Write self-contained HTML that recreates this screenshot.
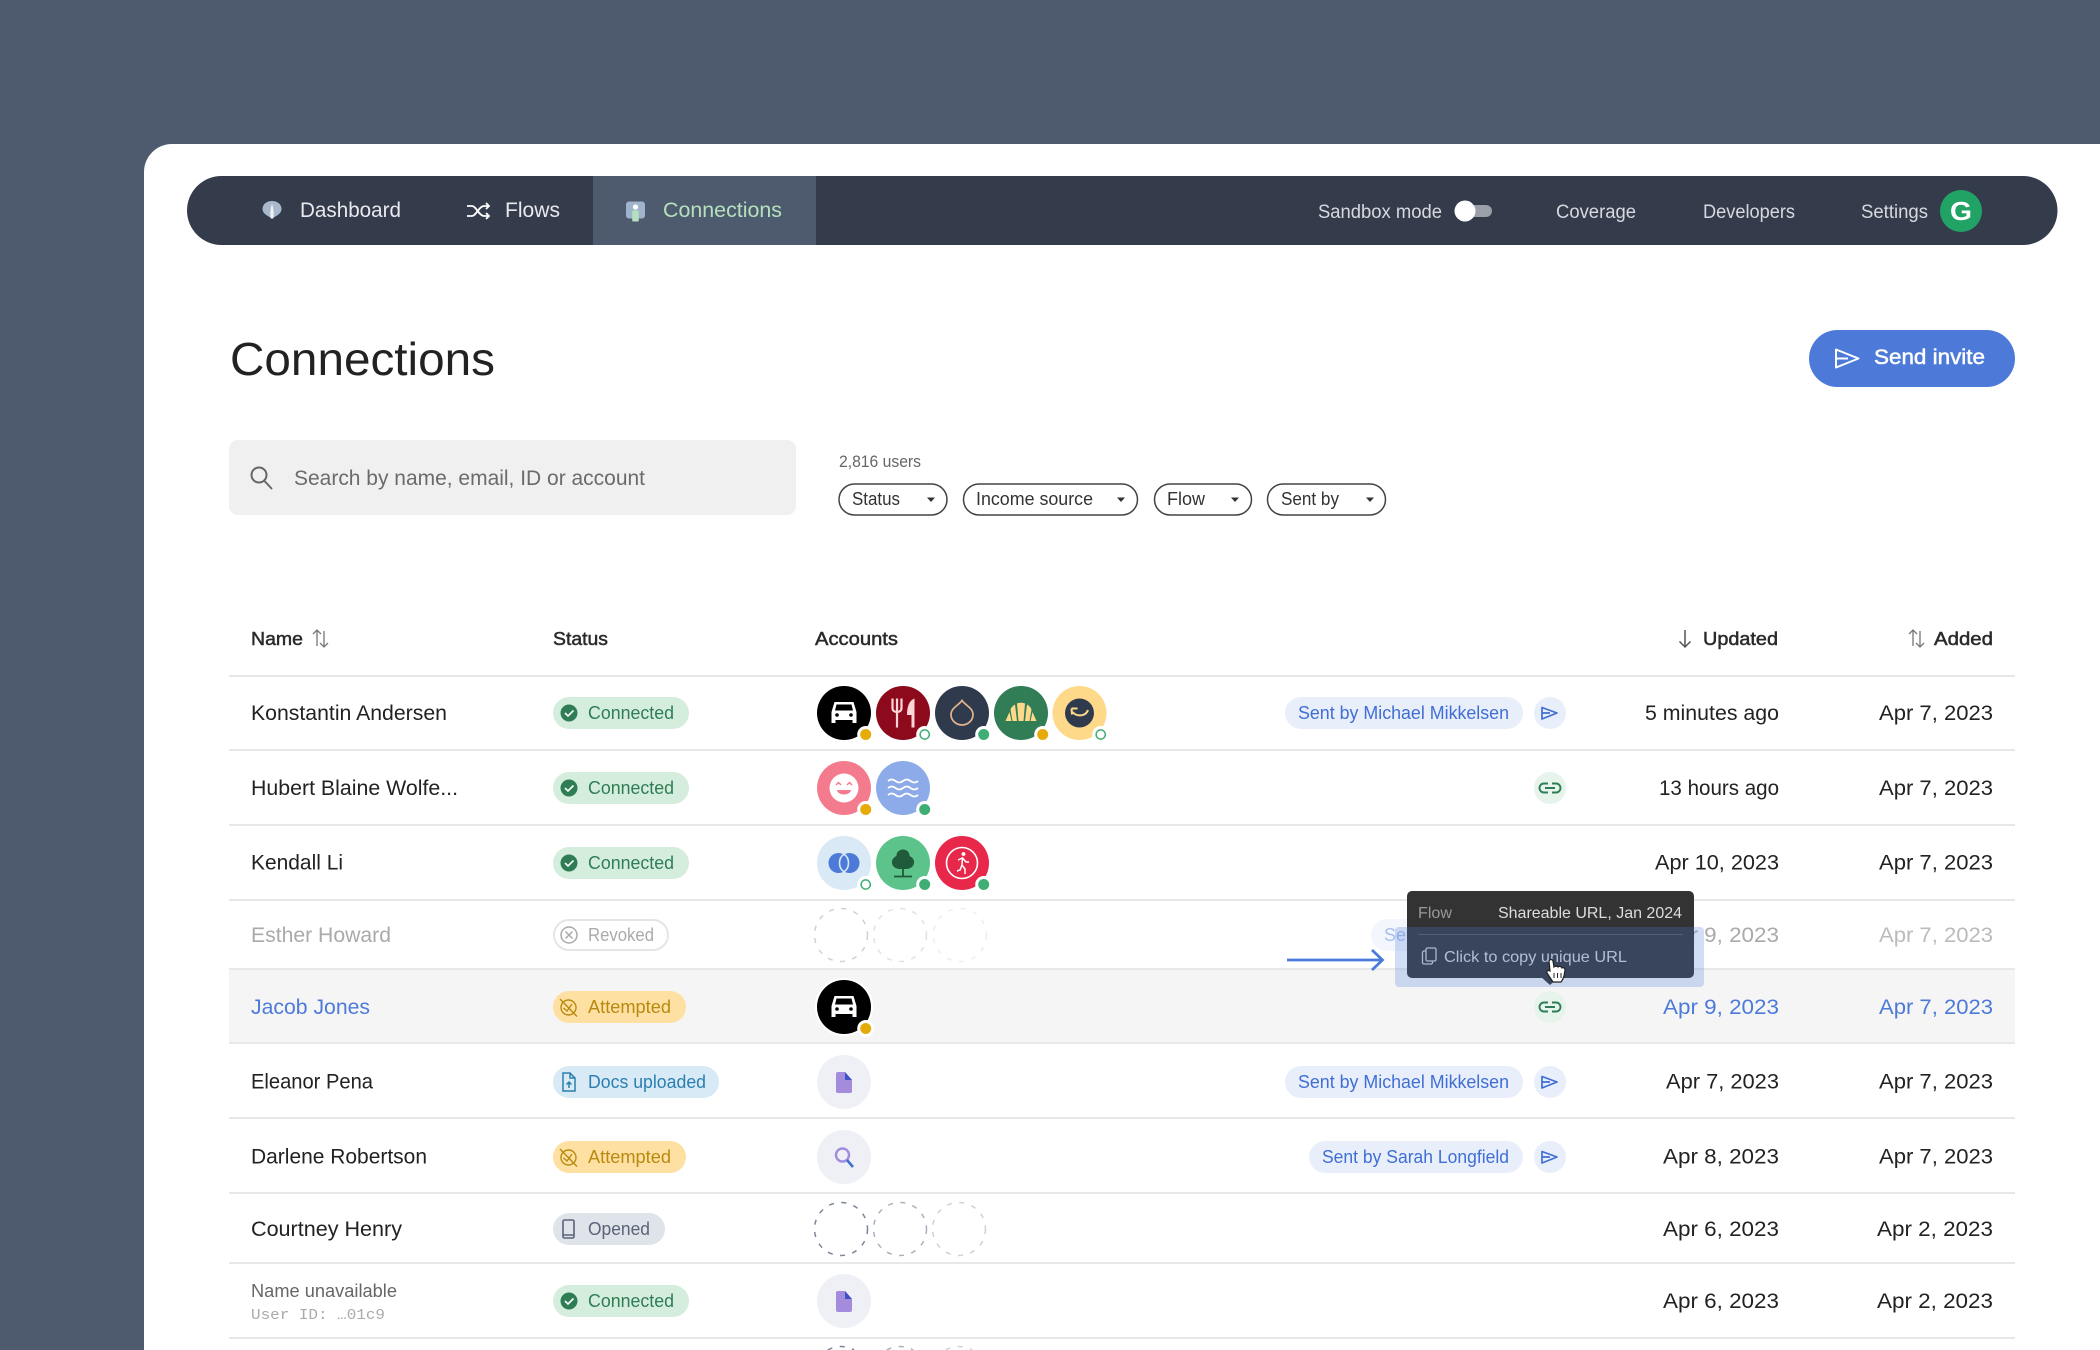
<!DOCTYPE html>
<html lang="en"><head><meta charset="utf-8"><title>Connections</title>
<style>
html,body{margin:0;padding:0;background:#4e5b6e;width:2100px;height:1350px;overflow:hidden}
svg{display:block}
text{font-family:"Liberation Sans",sans-serif;font-size:21.5px;fill:#222;white-space:pre}
.nav{font-size:21px;fill:#e8eaee}
.nav2{font-size:19px;fill:#d6d9df}
.f{font-size:18px;fill:#333}
.h{font-size:18.5px;fill:#2a2a2a;stroke:#2a2a2a;stroke-width:.5px}
.g{font-size:18px;fill:#2e7d55}
.y{font-size:18px;fill:#b98a0f}
.b{font-size:18px;fill:#2a7fb0}
.o{font-size:18px;fill:#5a6478}
.r{font-size:18px;fill:#aaa}
.s{font-size:18px;fill:#3f6fd4}
.t{font-size:16px;fill:#ddd}
.bl{fill:#4d7ad9}
.gr{fill:#aaa}
</style></head><body>
<svg xmlns="http://www.w3.org/2000/svg" width="2100" height="1350" viewBox="0 0 2100 1350">
<rect width="2100" height="1350" fill="#4e5b6e"/>
<path d="M144,1350 V172 a28,28 0 0 1 28,-28 H2100 V1350 Z" fill="#fff"/>

<!-- NAV -->
<rect x="187" y="176" width="1870.5" height="69" rx="34.5" fill="#343b4b"/>
<rect x="593" y="176" width="223" height="69" fill="#4e5b6e"/>
<g transform="translate(272,210)"><path d="M-9.5,-1 C-9.5,-6 -5,-9 0,-9 C5,-9 9.5,-6 9.5,-1 C9.5,3 6,5 2.5,7 L-2.5,7 C-6,5 -9.5,3 -9.5,-1Z" fill="#a9b8cc"/><path d="M0,-6 C1.500,-2 2,3 1.500,8.500 L-1.500,8.500 C-2,3 -1.500,-2 0,-6Z" fill="#eef2f6"/></g>
<text class="nav" x="300" y="217" textLength="101" lengthAdjust="spacingAndGlyphs">Dashboard</text>
<g transform="translate(478,211)" fill="none" stroke="#fff" stroke-width="1.8"><path d="M-11,-5 H-6 C-2,-5 1,5 6,5 H11"/><path d="M-11,5 H-6 C-2,5 1,-5 6,-5 H11"/><path d="M8,-8 L11,-5 L8,-2 M8,2 L11,5 L8,8"/></g>
<text class="nav" x="505" y="217" textLength="55" lengthAdjust="spacingAndGlyphs">Flows</text>
<g transform="translate(635.5,211)"><rect x="-9.5" y="-9.5" width="19" height="17" rx="3" fill="#9fb3cc"/><circle cx="0" cy="-4" r="2.6" fill="#fff"/><rect x="-3.3" y="-0.5" width="6.6" height="11" rx="1" fill="#b5e0bd"/></g>
<text class="nav" x="663" y="217" textLength="119" lengthAdjust="spacingAndGlyphs" style="fill:#b5e0bd">Connections</text>
<text class="nav2" x="1318" y="218" textLength="124" lengthAdjust="spacingAndGlyphs">Sandbox mode</text>
<rect x="1465" y="205" width="27" height="12" rx="6" fill="#9a9fa9"/>
<circle cx="1465" cy="211" r="10.5" fill="#fff"/>
<text class="nav2" x="1556" y="218" textLength="80" lengthAdjust="spacingAndGlyphs">Coverage</text>
<text class="nav2" x="1703" y="218" textLength="92" lengthAdjust="spacingAndGlyphs">Developers</text>
<text class="nav2" x="1861" y="218" textLength="67" lengthAdjust="spacingAndGlyphs">Settings</text>
<circle cx="1961" cy="211" r="21" fill="#21a366"/>
<text x="1950" y="220" textLength="22" lengthAdjust="spacingAndGlyphs" style="font-size:26px;font-weight:bold;fill:#fff">G</text>

<!-- TITLE -->
<text x="230" y="375" textLength="265" lengthAdjust="spacingAndGlyphs" style="font-size:46px">Connections</text>
<rect x="1809" y="330" width="206" height="57" rx="28.5" fill="#4d7ad9"/>
<path d="M1836,349.500 L1858.500,358.500 L1836,367.500 Z M1836,358.500 H1848" fill="none" stroke="#fff" stroke-width="2" stroke-linejoin="round"/>
<text x="1874" y="364" textLength="111" lengthAdjust="spacingAndGlyphs" style="font-size:21px;fill:#fff;stroke:#fff;stroke-width:.5px">Send invite</text>

<!-- SEARCH + FILTERS -->
<rect x="229" y="440" width="567" height="75" rx="9" fill="#f0f0f0"/>
<circle cx="259" cy="475" r="7.5" fill="none" stroke="#666" stroke-width="2"/><path d="M264.500,481 L272,489" stroke="#666" stroke-width="2"/>
<text x="294" y="485" textLength="351" lengthAdjust="spacingAndGlyphs" style="font-size:21px;fill:#6b6b6b">Search by name, email, ID or account</text>
<text x="839" y="467" textLength="82" lengthAdjust="spacingAndGlyphs" style="font-size:16.500px;fill:#666">2,816 users</text>
<g fill="none" stroke="#444" stroke-width="1.500">
<rect x="839" y="484" width="108" height="31" rx="15.500"/>
<rect x="963.500" y="484" width="174" height="31" rx="15.500"/>
<rect x="1154.500" y="484" width="97" height="31" rx="15.500"/>
<rect x="1267.500" y="484" width="118" height="31" rx="15.500"/>
</g>
<g fill="#333">
<path d="M927,497.500 h8 l-4,4.500z"/><path d="M1117,497.500 h8 l-4,4.500z"/><path d="M1231,497.500 h8 l-4,4.500z"/><path d="M1366,497.500 h8 l-4,4.500z"/>
</g>
<text class="f" x="852" y="505" textLength="48" lengthAdjust="spacingAndGlyphs">Status</text>
<text class="f" x="976" y="505" textLength="117" lengthAdjust="spacingAndGlyphs">Income source</text>
<text class="f" x="1167" y="505" textLength="38" lengthAdjust="spacingAndGlyphs">Flow</text>
<text class="f" x="1281" y="505" textLength="58" lengthAdjust="spacingAndGlyphs">Sent by</text>

<!-- TABLE HEADER -->
<text class="h" x="251" y="645" textLength="52" lengthAdjust="spacingAndGlyphs">Name</text>
<path d="M317,646 V630 M313,634 L317,630 L321,634 M324,631 V647 M320,643 L324,647 L328,643" fill="none" stroke="#777" stroke-width="1.300"/>
<text class="h" x="553" y="645" textLength="55" lengthAdjust="spacingAndGlyphs">Status</text>
<text class="h" x="815" y="645" textLength="83" lengthAdjust="spacingAndGlyphs">Accounts</text>
<path d="M1685,630 V647 M1679.500,641.500 L1685,647 L1690.500,641.500" fill="none" stroke="#555" stroke-width="1.500"/>
<text class="h" x="1703" y="645" textLength="75" lengthAdjust="spacingAndGlyphs">Updated</text>
<path d="M1913,646 V630 M1909,634 L1913,630 L1917,634 M1920,631 V647 M1916,643 L1920,647 L1924,643" fill="none" stroke="#777" stroke-width="1.300"/>
<text class="h" x="1934" y="645" textLength="59" lengthAdjust="spacingAndGlyphs">Added</text>

<!-- highlighted row bg and lines -->
<rect x="229" y="968" width="1786" height="75" fill="#f5f5f5"/>
<g fill="#e8e8e8">
<rect x="229" y="675" width="1786" height="2"/><rect x="229" y="749" width="1786" height="2"/><rect x="229" y="824" width="1786" height="2"/><rect x="229" y="899" width="1786" height="2"/><rect x="229" y="968" width="1786" height="2"/><rect x="229" y="1042" width="1786" height="2"/><rect x="229" y="1117" width="1786" height="2"/><rect x="229" y="1192" width="1786" height="2"/><rect x="229" y="1262" width="1786" height="2"/><rect x="229" y="1337" width="1786" height="2"/>
</g>

<!-- NAMES -->
<text x="251" y="720" textLength="196" lengthAdjust="spacingAndGlyphs">Konstantin Andersen</text>
<text x="251" y="795" textLength="207" lengthAdjust="spacingAndGlyphs">Hubert Blaine Wolfe...</text>
<text x="251" y="869.500" textLength="92" lengthAdjust="spacingAndGlyphs">Kendall Li</text>
<text class="gr" x="251" y="942" textLength="140" lengthAdjust="spacingAndGlyphs">Esther Howard</text>
<text class="bl" x="251" y="1014" textLength="119" lengthAdjust="spacingAndGlyphs">Jacob Jones</text>
<text x="251" y="1088.500" textLength="122" lengthAdjust="spacingAndGlyphs">Eleanor Pena</text>
<text x="251" y="1163.500" textLength="176" lengthAdjust="spacingAndGlyphs">Darlene Robertson</text>
<text x="251" y="1236" textLength="151" lengthAdjust="spacingAndGlyphs">Courtney Henry</text>
<text x="251" y="1297" textLength="146" lengthAdjust="spacingAndGlyphs" style="font-size:18px;fill:#666">Name unavailable</text>
<text x="251" y="1319" textLength="134" lengthAdjust="spacingAndGlyphs" style="font-family:'Liberation Mono',monospace;font-size:15px;fill:#aaa">User ID: …01c9</text>

<!-- STATUS PILLS -->
<rect x="553" y="697" width="136" height="32" rx="16" fill="#d5eddd"/><circle cx="569" cy="713" r="8.500" fill="#2e7d55"/><path d="M565,713 l3,3 l5.500,-5.500" fill="none" stroke="#fff" stroke-width="1.600"/>
<text class="g" x="588" y="719" textLength="86" lengthAdjust="spacingAndGlyphs">Connected</text>
<rect x="553" y="772" width="136" height="32" rx="16" fill="#d5eddd"/><circle cx="569" cy="788" r="8.500" fill="#2e7d55"/><path d="M565,788 l3,3 l5.500,-5.500" fill="none" stroke="#fff" stroke-width="1.600"/>
<text class="g" x="588" y="794" textLength="86" lengthAdjust="spacingAndGlyphs">Connected</text>
<rect x="553" y="847" width="136" height="32" rx="16" fill="#d5eddd"/><circle cx="569" cy="863" r="8.500" fill="#2e7d55"/><path d="M565,863 l3,3 l5.500,-5.500" fill="none" stroke="#fff" stroke-width="1.600"/>
<text class="g" x="588" y="869" textLength="86" lengthAdjust="spacingAndGlyphs">Connected</text>
<rect x="554" y="920" width="114" height="30" rx="15" fill="#fff" stroke="#e5e5e5" stroke-width="2"/><circle cx="569" cy="935" r="8" fill="none" stroke="#aaa" stroke-width="1.500"/><path d="M565.500,931.500 l7,7 m0,-7 l-7,7" stroke="#aaa" stroke-width="1.500"/>
<text class="r" x="588" y="941" textLength="66" lengthAdjust="spacingAndGlyphs">Revoked</text>
<rect x="553" y="991" width="133" height="32" rx="16" fill="#ffe0a3"/><g fill="none" stroke="#b98a0f" stroke-width="1.400"><circle cx="568.500" cy="1007.500" r="7.500"/><path d="M560,999 L577,1016.500 M563.500,1008 L567,1011 L572,1004"/></g>
<text class="y" x="588" y="1013" textLength="83" lengthAdjust="spacingAndGlyphs">Attempted</text>
<rect x="553" y="1066" width="166" height="32" rx="16" fill="#d8eaf5"/><path d="M563,1073 h7 l5,5 v13 h-12z M570,1073 v5 h5 M569,1088 v-6 m-2.500,2.500 l2.500,-2.500 l2.500,2.500" fill="none" stroke="#2a7fb0" stroke-width="1.500"/>
<text class="b" x="588" y="1088" textLength="118" lengthAdjust="spacingAndGlyphs">Docs uploaded</text>
<rect x="553" y="1141" width="133" height="32" rx="16" fill="#ffe0a3"/><g fill="none" stroke="#b98a0f" stroke-width="1.400"><circle cx="568.500" cy="1157.500" r="7.500"/><path d="M560,1149 L577,1166.500 M563.500,1158 L567,1161 L572,1154"/></g>
<text class="y" x="588" y="1163" textLength="83" lengthAdjust="spacingAndGlyphs">Attempted</text>
<rect x="553" y="1213" width="112" height="32" rx="16" fill="#dfe3ea"/><rect x="563" y="1220" width="11" height="18" rx="1.500" fill="none" stroke="#5a6478" stroke-width="1.600"/><path d="M563,1235 h11" stroke="#5a6478" stroke-width="1.500"/>
<text class="o" x="588" y="1235" textLength="62" lengthAdjust="spacingAndGlyphs">Opened</text>
<rect x="553" y="1285" width="136" height="32" rx="16" fill="#d5eddd"/><circle cx="569" cy="1301" r="8.500" fill="#2e7d55"/><path d="M565,1301 l3,3 l5.500,-5.500" fill="none" stroke="#fff" stroke-width="1.600"/>
<text class="g" x="588" y="1307" textLength="86" lengthAdjust="spacingAndGlyphs">Connected</text>

<!-- AVATARS ROW 1 -->
<g transform="translate(844,713)"><circle r="27" fill="#000"/><path d="M-12.500,10 V-1 L-9.500,-11 H9.500 L12.500,-1 V10 H8.500 V7 H-8.500 V10 Z" fill="#fff"/><path d="M-7.500,-8.500 H7.500 L9,-2.500 H-9 Z" fill="#000"/><circle cx="-7" cy="2" r="1.800" fill="#000"/><circle cx="7" cy="2" r="1.800" fill="#000"/></g>
<circle cx="865.700" cy="734.500" r="8.500" fill="#fff"/><circle cx="865.700" cy="734.500" r="5.500" fill="#e5ab0a"/>
<g transform="translate(903,713)"><circle r="27" fill="#8c0a1c"/><path d="M-10.500,-14.500 V-5 C-10.500,-2 -8,-1 -6,-1 C-4,-1 -1.500,-2 -1.500,-5 V-14.500 M-6,-14.500 V14.500" fill="none" stroke="#ffd5d8" stroke-width="2.200"/><path d="M11.500,-14.500 C6,-12.500 4,-6 4,2 H8.500 V14.500 H11.500 Z" fill="#ffd5d8"/></g>
<circle cx="924.700" cy="734.500" r="8.500" fill="#fff"/><circle cx="924.700" cy="734.500" r="4.600" fill="#fff" stroke="#3fae74" stroke-width="1.500"/>
<g transform="translate(962,713)"><circle r="27" fill="#2f3a4d"/><path d="M0,-12.500 C3,-8 11,-5 11,1.500 A11,10.500 0 0 1 -11,1.500 C-11,-5 -3,-8 0,-12.500Z" fill="none" stroke="#e5b58f" stroke-width="1.700"/></g>
<circle cx="983.700" cy="734.500" r="8.500" fill="#fff"/><circle cx="983.700" cy="734.500" r="5.500" fill="#3fae74"/>
<g transform="translate(1021,713)"><circle r="27" fill="#317d56"/><g fill="#ffd98a"><path d="M-4,-9.500 C-2,-10.500 2,-10.500 4,-9.500 L2.500,8 H-2.500Z"/><path d="M-6,-8.500 L-4,8 H-8.500 L-10.500,-3.500 C-9.500,-6 -8,-7.500 -6,-8.500Z"/><path d="M6,-8.500 L4,8 H8.500 L10.500,-3.500 C9.500,-6 8,-7.500 6,-8.500Z"/><path d="M-11.500,-1 L-9.500,8 H-15.500 Z"/><path d="M11.500,-1 L9.500,8 H15.500 Z"/></g></g>
<circle cx="1042.700" cy="734.500" r="8.500" fill="#fff"/><circle cx="1042.700" cy="734.500" r="5.500" fill="#e5ab0a"/>
<g transform="translate(1079.500,713)"><circle r="27" fill="#ffd98a"/><circle r="14.500" fill="#2f3a4d"/><path d="M8.500,-3 C6.500,3 -2,4.500 -7,-1 M-8,-4.500 L-7.500,1.500 M-8,-4.500 L-2,-4.500" fill="none" stroke="#ffd98a" stroke-width="2"/></g>
<circle cx="1100.700" cy="734.500" r="8.500" fill="#fff"/><circle cx="1100.700" cy="734.500" r="4.600" fill="#fff" stroke="#3fae74" stroke-width="1.500"/>

<!-- AVATARS ROW 2 -->
<g transform="translate(844,788)"><circle r="27" fill="#f47a8d"/><circle r="14.500" fill="#fff"/><path d="M-8,-3 L-5.500,-5.500 L-3,-3 M3,-3 L5.500,-5.500 L8,-3" fill="none" stroke="#f47a8d" stroke-width="1.500"/><path d="M-7,2 H7 C6,8 -6,8 -7,2Z" fill="#f47a8d"/></g>
<circle cx="865.700" cy="809.500" r="8.500" fill="#fff"/><circle cx="865.700" cy="809.500" r="5.500" fill="#e5ab0a"/>
<g transform="translate(903,788)"><circle r="27" fill="#8dabe8"/><path d="M-15,-7 q3.750,-3 7.500,0 t7.500,0 t7.500,0 t7.500,0 M-15,0 q3.750,-3 7.500,0 t7.500,0 t7.500,0 t7.500,0 M-15,7 q3.750,-3 7.500,0 t7.500,0 t7.500,0 t7.500,0" fill="none" stroke="#fff" stroke-width="1.800"/></g>
<circle cx="924.700" cy="809.500" r="8.500" fill="#fff"/><circle cx="924.700" cy="809.500" r="5.500" fill="#3fae74"/>

<!-- AVATARS ROW 3 -->
<g transform="translate(844,863)"><circle r="27" fill="#d9e9f5"/><circle cx="-5.500" r="10" fill="#4d7ad9"/><circle cx="5.500" r="10" fill="#4d7ad9"/><path d="M0,-8.800 C6,-5 6,5 0,8.800 C-6,5 -6,-5 0,-8.800Z" fill="#4d7ad9" stroke="#d9e9f5" stroke-width="1.600"/></g>
<circle cx="865.700" cy="884.500" r="8.500" fill="#fff"/><circle cx="865.700" cy="884.500" r="4.600" fill="#fff" stroke="#3fae74" stroke-width="1.500"/>
<g transform="translate(903,863)"><circle r="27" fill="#5cc48a"/><path d="M0,-13.500 C4,-13.500 7,-10 6.500,-7 C10,-5.500 11.500,-2.500 11,0 C10.500,4 7,6 3,6 H-3 C-7,6 -10.500,4 -11,0 C-11.500,-2.500 -10,-5.500 -6.500,-7 C-7,-10 -4,-13.500 0,-13.500Z" fill="#1f5a3a"/><path d="M0,4 V13.500 M-9,13.500 H9" stroke="#1f5a3a" stroke-width="1.800" fill="none"/></g>
<circle cx="924.700" cy="884.500" r="8.500" fill="#fff"/><circle cx="924.700" cy="884.500" r="5.500" fill="#3fae74"/>
<g transform="translate(962,863)"><circle r="27" fill="#e8284a"/><circle r="15.500" fill="none" stroke="#fff" stroke-width="1.600"/><circle cx="1.500" cy="-9" r="1.900" fill="#fff"/><path d="M-5,8 L-2,7 L0,2 L3,6 L3,11 M0,2 L0.500,-5 L-4,-3 M0.500,-5 L4,-1 L7,-1" fill="none" stroke="#fff" stroke-width="1.500"/></g>
<circle cx="983.700" cy="884.500" r="8.500" fill="#fff"/><circle cx="983.700" cy="884.500" r="5.500" fill="#3fae74"/>

<!-- ESTHER DASHED -->
<g fill="none" stroke-width="1.500" stroke-dasharray="5 7.500">
<circle cx="841" cy="935" r="26.500" stroke="#d0d0d0"/><circle cx="900" cy="935" r="26.500" stroke="#e2e2e2"/><circle cx="960" cy="935" r="26.500" stroke="#eeeeee"/>
</g>
<!-- JACOB AVATAR -->
<g transform="translate(844,1007)"><circle r="29" fill="#fff"/><circle r="27" fill="#000"/><path d="M-12.500,10 V-1 L-9.500,-11 H9.500 L12.500,-1 V10 H8.500 V7 H-8.500 V10 Z" fill="#fff"/><path d="M-7.500,-8.500 H7.500 L9,-2.500 H-9 Z" fill="#000"/><circle cx="-7" cy="2" r="1.800" fill="#000"/><circle cx="7" cy="2" r="1.800" fill="#000"/></g>
<circle cx="865.700" cy="1028.500" r="8.500" fill="#fff"/><circle cx="865.700" cy="1028.500" r="5.500" fill="#e5ab0a"/>
<!-- ELEANOR -->
<circle cx="844" cy="1082" r="27" fill="#eff0f6"/><path d="M836,1074 a2,2 0 0 1 2,-2 h7 l7,8 v11 a2,2 0 0 1 -2,2 h-12 a2,2 0 0 1 -2,-2z" fill="#a38cdc"/><path d="M845,1072 l7,8 h-7z" fill="#3e52c8"/>
<!-- DARLENE -->
<circle cx="844" cy="1157" r="27" fill="#eff0f6"/><circle cx="842.500" cy="1155" r="6.500" fill="none" stroke="#a38cdc" stroke-width="2.400"/><path d="M847,1160 L853,1167" stroke="#3e6fd0" stroke-width="2.600"/>
<!-- COURTNEY DASHED -->
<g fill="none" stroke-width="1.500" stroke-dasharray="5 7.500">
<circle cx="841" cy="1229" r="26.500" stroke="#7a8497"/><circle cx="900" cy="1229" r="26.500" stroke="#a9b0bc"/><circle cx="959" cy="1229" r="26.500" stroke="#cdd1d8"/>
<path d="M827.800,1350 A26.500,26.500 0 0 1 854.200,1350" stroke="#7a8497"/><path d="M886.800,1350 A26.500,26.500 0 0 1 913.200,1350" stroke="#a9b0bc"/><path d="M945.800,1350 A26.500,26.500 0 0 1 972.200,1350" stroke="#cdd1d8"/>
</g>
<!-- ROW 9 AVATAR -->
<circle cx="844" cy="1301" r="27" fill="#eff0f6"/><path d="M836,1293 a2,2 0 0 1 2,-2 h7 l7,8 v11 a2,2 0 0 1 -2,2 h-12 a2,2 0 0 1 -2,-2z" fill="#a38cdc"/><path d="M845,1291 l7,8 h-7z" fill="#3e52c8"/>

<!-- SENT BY -->
<rect x="1285" y="697" width="238" height="32" rx="16" fill="#e9eefb"/>
<text class="s" x="1298" y="719" textLength="211" lengthAdjust="spacingAndGlyphs">Sent by Michael Mikkelsen</text>
<circle cx="1550" cy="713" r="16" fill="#e9eefb"/><path d="M1542,707.500 L1557,713 L1542,719 Z M1542,713 H1550" fill="none" stroke="#3f6fd4" stroke-width="1.700" stroke-linejoin="round"/>
<circle cx="1550" cy="788" r="16" fill="#e6f4ec"/><g fill="none" stroke="#2e7d55" stroke-width="1.900"><path d="M1548,783.500 h-4 a4.500,4.500 0 0 0 0,9 h4 M1552,783.500 h4 a4.500,4.500 0 0 1 0,9 h-4 M1545,788 h10"/></g>
<rect x="1371" y="919" width="152" height="32" rx="16" fill="#f3f6fd"/>
<text x="1384" y="941" textLength="22" lengthAdjust="spacingAndGlyphs" style="font-size:18px;fill:#a9c0ee">Se</text>
<circle cx="1550" cy="1007" r="16" fill="#e6f4ec"/><g fill="none" stroke="#2e7d55" stroke-width="1.900"><path d="M1548,1002.500 h-4 a4.500,4.500 0 0 0 0,9 h4 M1552,1002.500 h4 a4.500,4.500 0 0 1 0,9 h-4 M1545,1007 h10"/></g>
<rect x="1285" y="1066" width="238" height="32" rx="16" fill="#e9eefb"/>
<text class="s" x="1298" y="1088" textLength="211" lengthAdjust="spacingAndGlyphs">Sent by Michael Mikkelsen</text>
<circle cx="1550" cy="1082" r="16" fill="#e9eefb"/><path d="M1542,1076.500 L1557,1082 L1542,1088 Z M1542,1082 H1550" fill="none" stroke="#3f6fd4" stroke-width="1.700" stroke-linejoin="round"/>
<rect x="1309" y="1141" width="214" height="32" rx="16" fill="#e9eefb"/>
<text class="s" x="1322" y="1163" textLength="187" lengthAdjust="spacingAndGlyphs">Sent by Sarah Longfield</text>
<circle cx="1550" cy="1157" r="16" fill="#e9eefb"/><path d="M1542,1151.500 L1557,1157 L1542,1163 Z M1542,1157 H1550" fill="none" stroke="#3f6fd4" stroke-width="1.700" stroke-linejoin="round"/>

<!-- UPDATED -->
<text x="1645" y="720" textLength="134" lengthAdjust="spacingAndGlyphs">5 minutes ago</text>
<text x="1659" y="795" textLength="120" lengthAdjust="spacingAndGlyphs">13 hours ago</text>
<text x="1655" y="869.500" textLength="124" lengthAdjust="spacingAndGlyphs">Apr 10, 2023</text>
<text class="gr" x="1663" y="942" textLength="116" lengthAdjust="spacingAndGlyphs">Apr 9, 2023</text>
<text class="bl" x="1663" y="1014" textLength="116" lengthAdjust="spacingAndGlyphs">Apr 9, 2023</text>
<text x="1666" y="1088.500" textLength="113" lengthAdjust="spacingAndGlyphs">Apr 7, 2023</text>
<text x="1663" y="1163.500" textLength="116" lengthAdjust="spacingAndGlyphs">Apr 8, 2023</text>
<text x="1663" y="1236" textLength="116" lengthAdjust="spacingAndGlyphs">Apr 6, 2023</text>
<text x="1663" y="1308" textLength="116" lengthAdjust="spacingAndGlyphs">Apr 6, 2023</text>
<!-- ADDED -->
<text x="1879" y="720" textLength="114" lengthAdjust="spacingAndGlyphs">Apr 7, 2023</text>
<text x="1879" y="795" textLength="114" lengthAdjust="spacingAndGlyphs">Apr 7, 2023</text>
<text x="1879" y="869.500" textLength="114" lengthAdjust="spacingAndGlyphs">Apr 7, 2023</text>
<text class="gr" x="1879" y="942" textLength="114" lengthAdjust="spacingAndGlyphs" style="fill:#bbb">Apr 7, 2023</text>
<text class="bl" x="1879" y="1014" textLength="114" lengthAdjust="spacingAndGlyphs">Apr 7, 2023</text>
<text x="1879" y="1088.500" textLength="114" lengthAdjust="spacingAndGlyphs">Apr 7, 2023</text>
<text x="1879" y="1163.500" textLength="114" lengthAdjust="spacingAndGlyphs">Apr 7, 2023</text>
<text x="1877" y="1236" textLength="116" lengthAdjust="spacingAndGlyphs">Apr 2, 2023</text>
<text x="1877" y="1308" textLength="116" lengthAdjust="spacingAndGlyphs">Apr 2, 2023</text>

<!-- TOOLTIP -->
<path d="M1287,960 H1382 M1372,950 L1382.500,960 L1372,970" fill="none" stroke="#4a7bdb" stroke-width="2.800"/>
<rect x="1407" y="891" width="287" height="87" rx="5" fill="#333"/>
<path d="M1541,977 L1550,985 L1559,977Z" fill="#333"/>
<text x="1418" y="918" textLength="34" lengthAdjust="spacingAndGlyphs" style="font-size:16px;fill:#999">Flow</text>
<text class="t" x="1498" y="918" textLength="184" lengthAdjust="spacingAndGlyphs">Shareable URL, Jan 2024</text>
<rect x="1418" y="934" width="265" height="1" fill="#555"/>
<rect x="1426" y="948" width="10" height="13" rx="1.500" fill="none" stroke="#ccc" stroke-width="1.300"/>
<path d="M1426,951 h-2 a1.500,1.500 0 0 0 -1.500,1.500 v10 a1.500,1.500 0 0 0 1.500,1.500 h7 a1.500,1.500 0 0 0 1.500,-1.500 v-2" fill="none" stroke="#ccc" stroke-width="1.300"/>
<text class="t" x="1444" y="962" textLength="183" lengthAdjust="spacingAndGlyphs" style="fill:#d4d4d4">Click to copy unique URL</text>
<rect x="1395" y="927" width="309" height="60" rx="4" fill="#4d7ad9" fill-opacity=".25"/>
<!-- cursor -->
<path d="M1549,961 c1,-2 3,-2 4,0 l1,6 c1,-1 3,-1 4,0 c1,-1 3,-1 4,1 c1,-1 3,0 3,2 l-1,6 c-1,3 -2,5 -3,6 h-8 l-6,-9 c-1,-2 1,-3 3,-2z" fill="#fff" stroke="#222" stroke-width="1.200"/>
<path d="M1554,973 v5 M1557.500,973 v5 M1561,973 v5" stroke="#222" stroke-width="1"/>
</svg>
</body></html>
